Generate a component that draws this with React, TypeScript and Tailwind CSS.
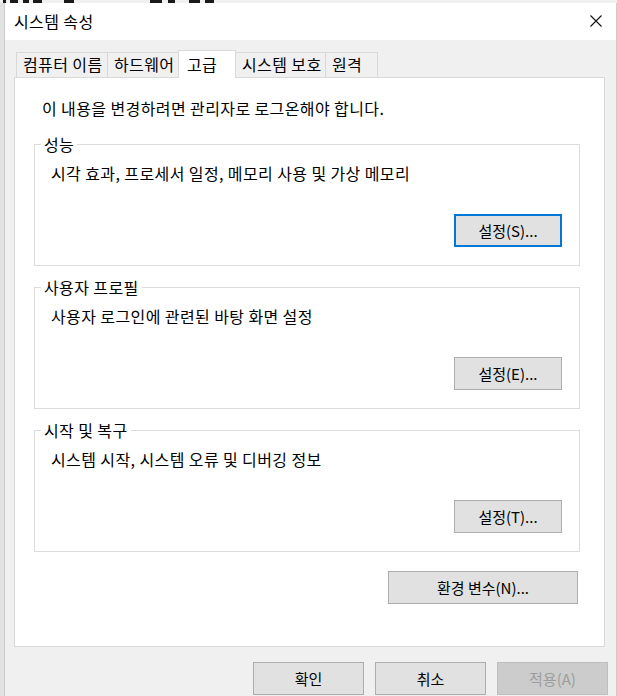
import { ReactNode } from "react";

const font = "font-['Noto_Sans_CJK_KR','Malgun_Gothic',sans-serif]";

const tabs = ["컴퓨터 이름", "하드웨어", "고급", "시스템 보호", "원격"];
const tabWidths = ["w-[92px]", "w-[72px]", "w-[58px]", "w-[91px]", "w-[53px]"];

// dark fragments of the window that sits behind the dialog
const sliver = [
  "ml-[3px] w-[3px]",
  "ml-[4px] w-[8px]",
  "ml-[5px] w-[6px]",
  "ml-[4px] w-[9px]",
  "ml-[22px] w-[10px]",
  "ml-[76px] w-[12px]",
  "ml-[6px] w-[7px]",
  "ml-[14px] w-[11px]",
  "ml-[5px] w-[9px]",
];

function WinButton({
  children,
  focused = false,
  disabled = false,
  className = "",
}: {
  children: ReactNode;
  focused?: boolean;
  disabled?: boolean;
  className?: string;
}) {
  const tone = disabled
    ? "bg-[#cccccc] border border-[#bfbfbf] text-[#9d9d9d]"
    : focused
      ? "bg-[#e1e1e1] border-2 border-[#0078d7] text-black"
      : "bg-[#e1e1e1] border border-[#adadad] text-black";
  return (
    <button
      type="button"
      className={`h-[33px] flex items-center justify-center text-[15px] leading-none ${tone} ${className}`}
    >
      {children}
    </button>
  );
}

function Group({
  title,
  text,
  button,
  focused = false,
  className = "",
}: {
  title: string;
  text: string;
  button: string;
  focused?: boolean;
  className?: string;
}) {
  return (
    <fieldset className={`border border-[#dcdcdc] h-[132px] flex flex-col ${className}`}>
      <legend className="ml-[6px] px-[3px] text-[16px] leading-[20px] tracking-[0.4px]">{title}</legend>
      <p className="pl-[16px] mt-[9px] text-[16px] leading-[20px] tracking-[0.4px]">{text}</p>
      <div className="flex justify-end mt-[31px] pr-[17px]">
        <WinButton focused={focused} className="w-[108px]">
          {button}
        </WinButton>
      </div>
    </fieldset>
  );
}

export default function App() {
  return (
    <div className={`w-[617px] h-[696px] bg-[#e2e2e2] pl-[4px] overflow-hidden text-black ${font}`}>
      <div className="h-[3px] bg-[#f0f0f0] -ml-[4px] flex">
        {sliver.map((c, i) => (
          <span key={i} className={`h-[3px] bg-[#1a1a1a] ${c}`} />
        ))}
      </div>
      <div className="w-[613px] h-[720px] bg-[#f0f0f0] border-l border-r border-[#cbcbcb] flex flex-col">
        {/* title bar */}
        <div className="h-[37px] bg-white flex items-center justify-between pl-[9px] pr-[14px]">
          <span className="text-[16px] leading-none mt-[-2px] tracking-[0.4px]">시스템 속성</span>
          <svg width="12" height="12" viewBox="0 0 12 12" className="mt-[-2px]">
            <path d="M0.5 0.5 L11.5 11.5 M11.5 0.5 L0.5 11.5" stroke="#111" strokeWidth="1.1" fill="none" />
          </svg>
        </div>

        {/* tabs */}
        <div className="mt-[10px] ml-[9px] pl-[2px] h-[27px] flex items-end relative z-10">
          {tabs.map((t, i) => {
            const active = i === 2;
            return (
              <div
                key={t}
                className={
                  active
                    ? `${tabWidths[i]} h-[28px] -mb-px bg-white border-t border-l border-r border-[#d9d9d9] pl-[8px] pt-[3px] text-[16px] leading-[20px] tracking-[0.4px] -ml-px`
                    : `${tabWidths[i]} h-[25px] bg-[#f0f0f0] border-t border-l border-r border-[#d9d9d9] pl-[6px] pt-[1px] text-[16px] leading-[20px] tracking-[0.4px] whitespace-nowrap ${i === 0 ? "" : "-ml-px"}`
                }
              >
                {t}
              </div>
            );
          })}
        </div>

        {/* panel */}
        <div className="ml-[9px] w-[591px] h-[570px] bg-white border border-[#d9d9d9] flex flex-col pl-[19px] pr-[24px]">
          <p className="mt-[20px] ml-[8px] text-[16px] leading-[20px] tracking-[0.4px]">
            이 내용을 변경하려면 관리자로 로그온해야 합니다.
          </p>
          <Group
            className="mt-[16px]"
            title="성능"
            text="시각 효과, 프로세서 일정, 메모리 사용 및 가상 메모리"
            button="설정(S)..."
            focused
          />
          <Group
            className="mt-[11px]"
            title="사용자 프로필"
            text="사용자 로그인에 관련된 바탕 화면 설정"
            button="설정(E)..."
          />
          <Group
            className="mt-[11px]"
            title="시작 및 복구"
            text="시스템 시작, 시스템 오류 및 디버깅 정보"
            button="설정(T)..."
          />
          <div className="flex justify-end mt-[19px] pr-[2px]">
            <WinButton className="w-[190px]">환경 변수(N)...</WinButton>
          </div>
        </div>

        {/* dialog buttons */}
        <div className="flex justify-end gap-[11px] mt-[15px] pr-[8px]">
          <WinButton className="w-[111px]">확인</WinButton>
          <WinButton className="w-[111px]">취소</WinButton>
          <WinButton disabled className="w-[111px]">
            적용(A)
          </WinButton>
        </div>
      </div>
    </div>
  );
}
